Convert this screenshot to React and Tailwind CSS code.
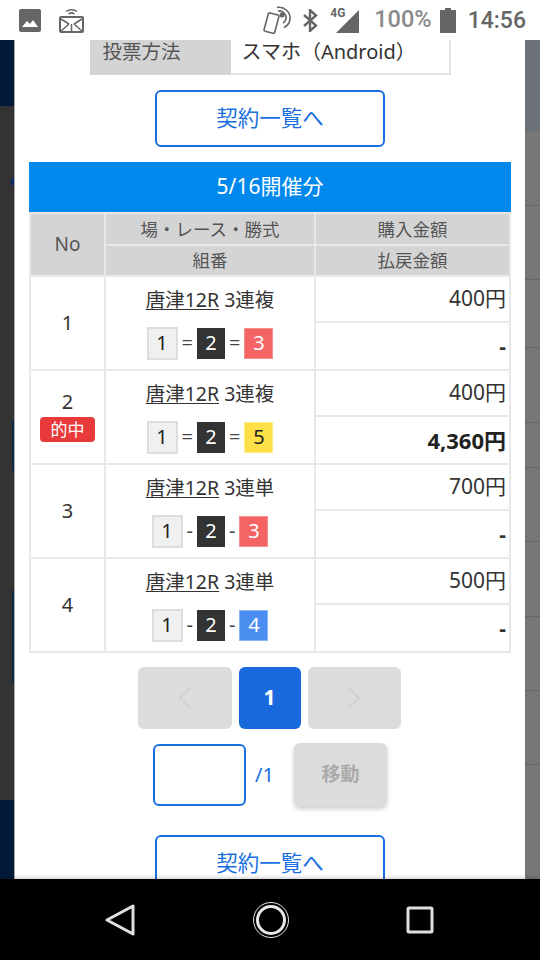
const rows = [
  { no: 1, race: "3連複", sep: "=", third: "3", amount: "400円", payout: "-" },
  { no: 2, race: "3連複", sep: "=", third: "5", amount: "400円", payout: "4,360円", hit: true },
  { no: 3, race: "3連単", sep: "-", third: "3", amount: "700円", payout: "-" },
  { no: 4, race: "3連単", sep: "-", third: "4", amount: "500円", payout: "-" },
];

const thirdColors = {
  3: "bg-[#f46464] text-white border-[#f78f8f]",
  4: "bg-[#4a8ef0] text-white border-[#8ab5f5]",
  5: "bg-[#fde047] text-[#222] border-[#fdeb8a]",
};

function StatusBar() {
  return (
    <div className="h-10 shrink-0 bg-white flex items-center pl-[19px] pr-[14px]">
      <svg width="22" height="23" viewBox="0 0 22 23">
        <rect width="22" height="23" rx="2" fill="#666" />
        <path d="M3 18l5-6 3 3 3-4 5 7z" fill="#fff" />
      </svg>
      <svg className="ml-[18px]" width="25" height="26" viewBox="0 0 25 26" fill="none" stroke="#666">
        <path d="M7 4.500c3-2.500 8-2.500 11 0M9.500 7c2-1.500 4-1.500 6 0" strokeWidth="1.500" />
        <rect x="1" y="10" width="23" height="15" rx="1" strokeWidth="2" />
        <path d="M2 12l8 5M23 12l-8 5M2 24l8-7M23 24l-8-7M12.500 17v7" strokeWidth="1.500" />
      </svg>
      <svg className="ml-auto" width="30" height="30" viewBox="0 0 30 30" fill="none" stroke="#666" strokeWidth="1.600">
        <rect x="3" y="8.500" width="11" height="19" rx="1.500" transform="rotate(15 8 18)" />
        <path d="M14 2.500a11 11 0 0 1 13 12 11 11 0 0 1-6 8M15 6a7 7 0 0 1 8 8 7 7 0 0 1-3 4" />
        <circle cx="19" cy="10" r="2.500" fill="#666" stroke="none" />
      </svg>
      <svg className="ml-[10px]" width="15" height="23" viewBox="0 0 15 23" fill="none" stroke="#666" strokeWidth="2.400">
        <path d="M1 6l12 10.500-6 5.500V1l6 5.500L1 17" />
      </svg>
      <div className="relative ml-[12px] w-[29px] h-[26px]">
        <svg className="absolute right-0 bottom-0" width="23" height="23" viewBox="0 0 23 23">
          <path d="M23 0v23H0z" fill="#666" />
        </svg>
        <span className="absolute left-0 top-0 text-[12px] leading-none font-bold text-[#666]">4G</span>
      </div>
      <span className="ml-[15px] text-[23.500px] leading-none text-[#8a8a8a] font-medium">100%</span>
      <svg className="ml-[8px]" width="16" height="25" viewBox="0 0 16 25">
        <path d="M5 0h6v2h5v23H0V2h5z" fill="#666" />
      </svg>
      <span className="ml-[12px] text-[23px] leading-none text-[#666] font-medium">14:56</span>
    </div>
  );
}

function LeftStrip() {
  return (
    <div className="w-[14px] shrink-0 flex flex-col bg-[#333]">
      <div className="h-[66px] bg-[#021a3a]" />
      <div className="mt-[72px] ml-[11px] h-[7px] bg-[#0b2a66]" />
      <div className="mt-[235px] ml-[12px] h-[52px] border-l-2 border-[#0f2748] rounded-bl-sm" />
      <div className="mt-[118px] ml-[12px] h-[93px] border-l-2 border-[#0f2748] rounded-l-sm" />
      <div className="mt-auto h-[79px] bg-[#021a3a]" />
    </div>
  );
}

function RightStrip() {
  const heights = [74, 74, 68, 75, 45, 74, 75, 74, 74];
  return (
    <div className="flex-1 flex flex-col bg-[#777]">
      <div className="h-[92px] shrink-0 bg-[#6d7278]" />
      {heights.map((h, i) => (
        <div key={i} className="border-b border-[#666] shrink-0" style={{ height: h }} />
      ))}
    </div>
  );
}

function ContractButton() {
  return (
    <button className="block mx-auto w-[230px] h-[57px] shrink-0 rounded-md border-2 border-[#1a6fe0] bg-white text-[#1a6fe0] text-[21.500px]">
      契約一覧へ
    </button>
  );
}

function Chip({ className, children }) {
  return <span className={`flex items-center justify-center text-[20px] leading-none ${className}`}>{children}</span>;
}

function Combo({ sep, third }) {
  return (
    <div className="mt-[14px] flex items-center justify-center gap-[4px]">
      <Chip className="w-[31px] h-[33px] bg-[#f0f0f0] border-2 border-[#ddd] text-[#222]">1</Chip>
      <span className="text-[20px] leading-none text-[#444]">{sep}</span>
      <Chip className="w-[28px] h-[31px] bg-[#333] text-white">2</Chip>
      <span className="text-[20px] leading-none text-[#444]">{sep}</span>
      <Chip className={`w-[29px] h-[31px] border ${thirdColors[third]}`}>{third}</Chip>
    </div>
  );
}

function ResultTable() {
  const cell = "border-2 border-[#e8e8e8]";
  return (
    <table className="w-[482px] table-fixed border-collapse text-[#333]">
      <colgroup>
        <col className="w-[75px]" />
        <col className="w-[210px]" />
        <col />
      </colgroup>
      <thead className="bg-[#d4d4d4] text-[#555] text-[17.500px]">
        <tr className="h-[32px]">
          <th rowSpan={2} className={`${cell} font-normal text-[19px]`}>No</th>
          <th className={`${cell} font-normal`}>場・レース・勝式</th>
          <th className={`${cell} font-normal`}>購入金額</th>
        </tr>
        <tr className="h-[31px]">
          <th className={`${cell} font-normal`}>組番</th>
          <th className={`${cell} font-normal`}>払戻金額</th>
        </tr>
      </thead>
      <tbody>
        {rows.map((r) => [
          <tr key={r.no} className="h-[46px]">
            <td rowSpan={2} className={`${cell} text-center text-[20px] leading-none`}>
              {r.no}
              {r.hit && (
                <div className="mx-auto mt-[5px] w-[55px] h-[25px] rounded bg-[#e83a3a] text-white text-[17px] flex items-center justify-center">
                  的中
                </div>
              )}
            </td>
            <td rowSpan={2} className={`${cell} text-center`}>
              <div className="text-[19.500px] leading-[26px]">
                <span className="underline underline-offset-2">唐津12R</span> {r.race}
              </div>
              <Combo sep={r.sep} third={r.third} />
            </td>
            <td className={`${cell} text-right pr-[3px] text-[21px] leading-none pb-[2px]`}>{r.amount}</td>
          </tr>,
          <tr key={`${r.no}-payout`} className="h-[48px]">
            <td className={`${cell} text-right pr-[3px] leading-none font-bold ${r.hit ? "text-[22px] text-[#222]" : "text-[21px]"}`}>
              {r.payout}
            </td>
          </tr>,
        ])}
      </tbody>
    </table>
  );
}

function Pager() {
  return (
    <>
      <div className="mt-[14px] pr-[2px] flex justify-center gap-[7px]">
        <div className="w-[94px] h-[62px] rounded-md bg-[#dcdcdc] flex items-center justify-center">
          <svg width="14" height="22" viewBox="0 0 14 22" fill="none" stroke="#cfcfcf" strokeWidth="1.500">
            <path d="M12 1L2 11l10 10" />
          </svg>
        </div>
        <div className="w-[62px] h-[62px] rounded-md bg-[#1769dc] text-white text-[21px] font-bold flex items-center justify-center">1</div>
        <div className="w-[93px] h-[62px] rounded-md bg-[#dcdcdc] flex items-center justify-center">
          <svg width="14" height="22" viewBox="0 0 14 22" fill="none" stroke="#cfcfcf" strokeWidth="1.500">
            <path d="M2 1l10 10L2 21" />
          </svg>
        </div>
      </div>
      <div className="mt-[14px] flex items-center justify-center">
        <input className="w-[93px] h-[62px] rounded-md border-2 border-[#1a6fe0] bg-white" />
        <span className="ml-[9px] w-[39px] text-[#1a6fe0] text-[20px]">/1</span>
        <div className="w-[93px] h-[63px] rounded-md bg-[#dcdcdc] text-[#aaa] text-[19px] font-bold shadow-[0_3px_5px_rgba(0,0,0,0.2)] flex items-center justify-center">
          移動
        </div>
      </div>
    </>
  );
}

function NavBar() {
  return (
    <div className="relative h-[81px] shrink-0 bg-black flex items-center pl-[105px] pr-[106px] justify-between shadow-[0_-2px_3px_rgba(0,0,0,0.15)]">
      <svg width="30" height="32" viewBox="0 0 30 32" fill="none" stroke="#e0e0e0" strokeWidth="3" strokeLinejoin="round">
        <path d="M28 2v28L2 16z" />
      </svg>
      <svg width="38" height="38" viewBox="0 0 38 38" fill="none" stroke="#e8e8e8">
        <circle cx="19" cy="19" r="17.500" strokeWidth="1" />
        <circle cx="19" cy="19" r="13.500" strokeWidth="3" />
      </svg>
      <svg width="28" height="28" viewBox="0 0 28 28" fill="none" stroke="#e0e0e0" strokeWidth="3" strokeLinejoin="round">
        <rect x="2" y="2" width="24" height="24" rx="1" />
      </svg>
    </div>
  );
}

export default function App() {
  return (
    <div className="w-[540px] h-[960px] flex flex-col overflow-hidden bg-white font-['Roboto','Noto_Sans_CJK_JP',sans-serif]">
      <StatusBar />
      <div className="h-[839px] flex overflow-hidden font-['Noto_Sans','Noto_Sans_CJK_JP',sans-serif]">
        <LeftStrip />
        <div className="w-[511px] shrink-0 bg-white border-l border-[#aaa] overflow-hidden">
          <div className="flex flex-col">
            <div className="flex justify-center h-[35px] shrink-0">
              <div className="w-[141px] bg-[#d4d4d4] text-[#555] text-[19.500px] leading-none flex items-center pl-[13px] pb-[11px]">投票方法</div>
              <div className="w-[220px] bg-white text-[#333] text-[20px] leading-none flex items-center pl-[11px] pb-[9px] border-r-2 border-b-2 border-[#e4e4e4]">
                スマホ（Android）
              </div>
            </div>
            <div className="mt-[15px]">
              <ContractButton />
            </div>
            <div className="mt-[15px] ml-[14px] w-[482px]">
              <div className="h-[50px] bg-[#0088ec] text-white text-[21px] flex items-center justify-center">5/16開催分</div>
              <ResultTable />
            </div>
            <Pager />
            <div className="mt-[29px]">
              <ContractButton />
            </div>
          </div>
        </div>
        <RightStrip />
      </div>
      <NavBar />
    </div>
  );
}
